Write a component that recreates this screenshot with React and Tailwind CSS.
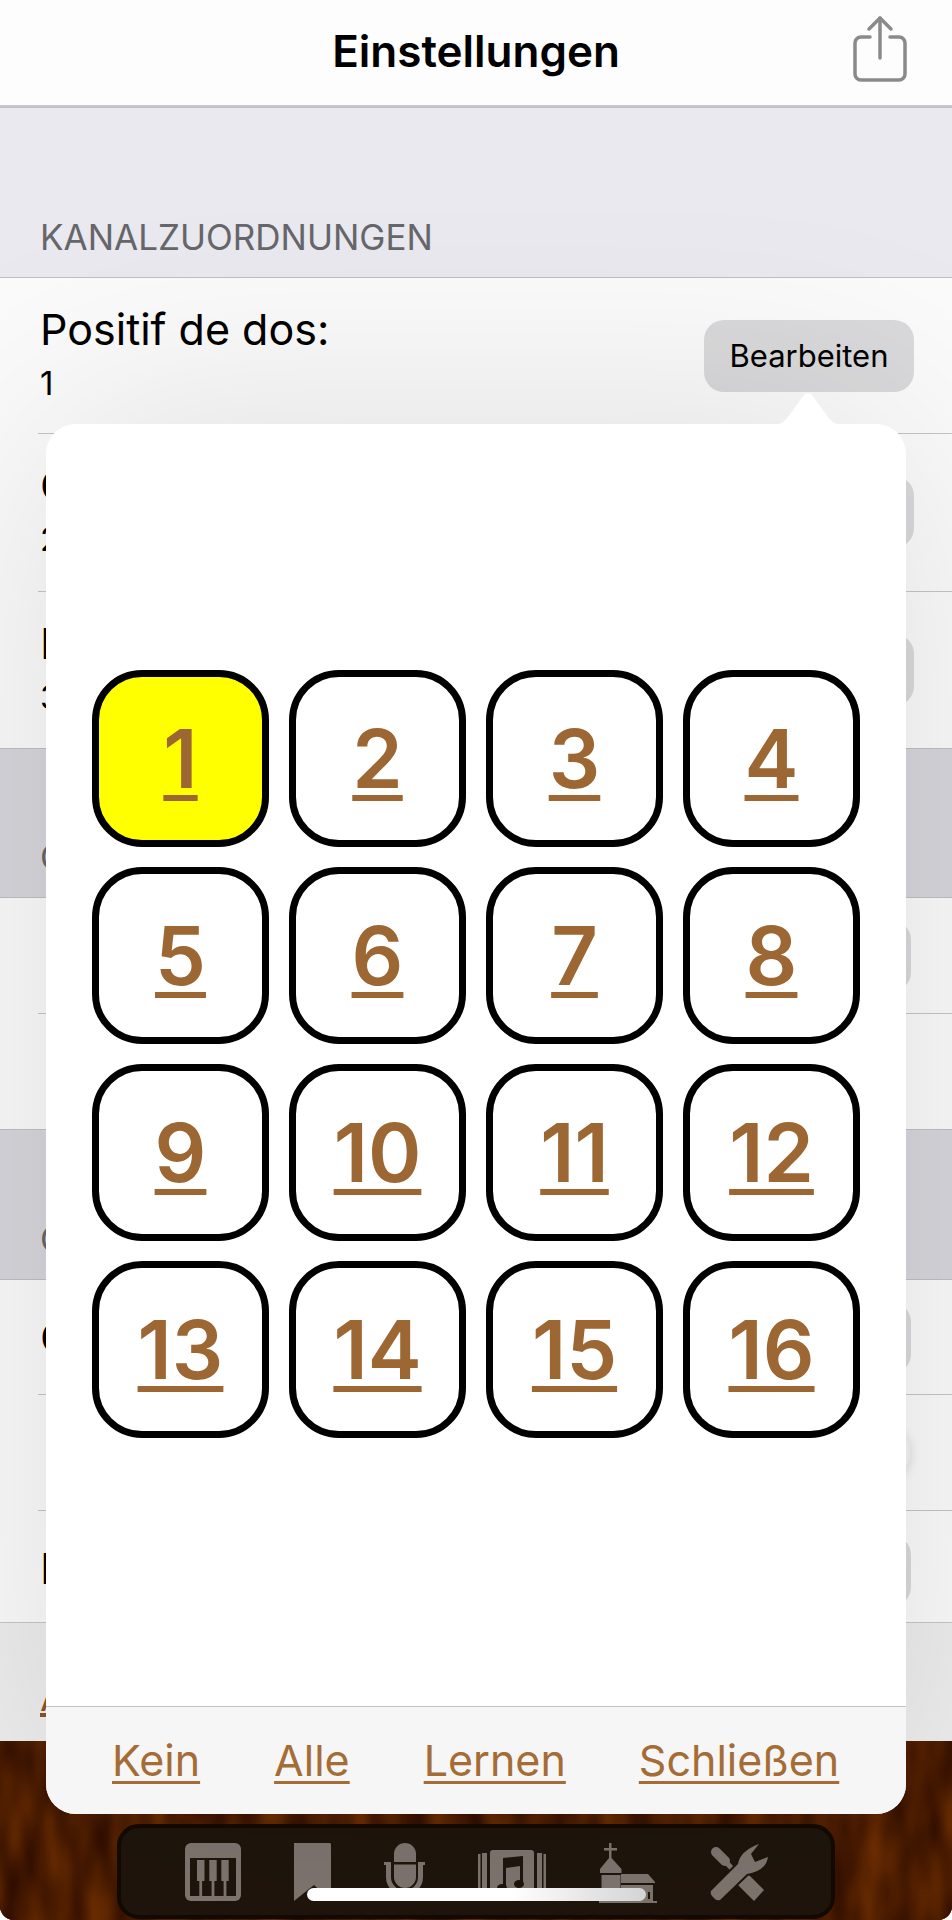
import React from 'react';

const channels = Array.from({ length: 16 }, (_, i) => i + 1);

function ShareIcon() {
  return (
    <svg width="56" height="70" viewBox="0 0 56 70" fill="none" stroke="#8a8a8c" strokeWidth="3.5" strokeLinecap="round" strokeLinejoin="round">
      <path d="M18 22H9a6 6 0 0 0-6 6v31a6 6 0 0 0 6 6h38a6 6 0 0 0 6-6V28a6 6 0 0 0-6-6h-9" />
      <path d="M28 43V3" />
      <path d="M17 14 28 3l11 11" />
    </svg>
  );
}

function PianoIcon() {
  return (
    <svg width="56" height="58" viewBox="0 0 56 58">
      <rect width="56" height="58" rx="6" fill="#7f7670" />
      <rect x="5" y="15" width="46" height="38" fill="#1f150c" />
      <path d="M12 17h7.500v21H12zM24.300 17h7.400v21h-7.400zM36.300 17h7.400v21h-7.400zM14.300 38h2.800v15h-2.800zM26.600 38h2.800v15h-2.800zM38.600 38h2.800v15h-2.800z" fill="#7f7670" />
    </svg>
  );
}

function BookmarkIcon() {
  return (
    <svg width="37" height="58" viewBox="0 0 37 58">
      <path d="M0 0h36l1 1v57L20 42 0 58z" fill="#7f7670" />
    </svg>
  );
}

function MicIcon() {
  return (
    <svg width="41" height="58" viewBox="0 0 41 58">
      <path d="M10 19V11a11 11 0 0 1 22 0v8zM10 21.500h22V34a11 11 0 0 1-22 0z" fill="#7f7670" />
      <path d="M4.500 20v14a16 16 0 0 0 32 0V20" fill="none" stroke="#7f7670" strokeWidth="5" />
      <path d="M0 19h7v3H0zM34 19h7v3h-7zM18 48h5v8h-5zM9 55h23v3H9z" fill="#7f7670" />
    </svg>
  );
}

function AlbumIcon() {
  return (
    <svg width="68" height="51" viewBox="0 0 68 51">
      <rect x="12" width="44" height="51" rx="3" fill="#7f7670" />
      <path d="M0 4h2.500v45H0zM4 3h5v47H4zM59 3h5v47h-5zM65.500 4H68v45h-2.500z" fill="#7f7670" />
      <path d="M25 8 45 6v27h-3V16l-14 2v21h-3z" fill="#1f150c" />
      <ellipse cx="24" cy="38" rx="5" ry="4" fill="#1f150c" />
      <ellipse cx="41" cy="34" rx="5" ry="4" fill="#1f150c" />
    </svg>
  );
}

function ChurchIcon() {
  return (
    <svg width="58" height="60" viewBox="0 0 58 60">
      <path d="M10 0h2.500v5H18v2.500h-5.500V15l10 11v4H1v-4L10 15V7.500H5V5h5zM2.500 32h19v28h-19z" fill="#7f7670" />
      <path d="M22 31h27l7 8v1H22zM22 42h32v16H22z" fill="#7f7670" />
      <path d="M0 58h58v2H0z" fill="#7f7670" />
      <path d="M49 49h2v7h-2z" fill="#1f150c" />
    </svg>
  );
}

function ToolsIcon() {
  return (
    <svg width="58" height="58" viewBox="0 0 58 58">
      <path d="M6 9 15 18" stroke="#7f7670" strokeWidth="10" strokeLinecap="round" fill="none" />
      <path d="M15 18 26 30" stroke="#7f7670" strokeWidth="5" fill="none" />
      <path d="M34 27 54 47 44 58 24 38z" fill="#7f7670" />
      <path
        d="M1 48 28 21Q30 8 49 1L41 11 45 19 58 14Q56 28 37 31L10 57Q7 58 5 56L2 53Q0 50 1 48Z"
        fill="#7f7670"
        stroke="#1f150c"
        strokeWidth="4"
        paintOrder="stroke"
      />
    </svg>
  );
}

function WoodTexture() {
  return (
    <svg className="absolute inset-0 h-full w-full" preserveAspectRatio="none">
      <defs>
        <filter id="wood" x="0" y="0" width="100%" height="100%" colorInterpolationFilters="sRGB">
          <feTurbulence type="fractalNoise" baseFrequency="0.035 0.012" numOctaves="2" seed="7" />
          <feColorMatrix type="matrix" values="0 0 0 0 0.18  0 0 0 0 0.05  0 0 0 0 0  1.800 0 0 0 -0.420" />
        </filter>
      </defs>
      <rect width="100%" height="100%" fill="#6a2c02" />
      <rect width="100%" height="100%" filter="url(#wood)" />
    </svg>
  );
}

function Row({ label, value, height, button, toggle, last, labelClass = 'pt-[27px]', buttonClass = 'mr-[38px] mt-[42px]' }) {
  return (
    <div className="bg-[#fbfbfb] pl-[38px]">
      <div className={`relative flex items-start justify-between ${last ? '' : 'border-b border-[#c6c6c8]'} ${height}`}>
        <div className={`pl-[2px] ${labelClass}`}>
          {label && <div className="text-[43px] leading-[48px] text-black">{label}</div>}
          {value && <div className="mt-[11px] text-[33px] leading-[38px] text-black">{value}</div>}
        </div>
        {button && (
          <button className={`flex h-[72px] w-[210px] items-center justify-center rounded-[20px] bg-[#dadadc] text-[31px] text-black ${buttonClass}`}>
            Bearbeiten
          </button>
        )}
        {toggle && (
          <div className="mr-[42px] mt-[27px] h-[60px] w-[60px] rounded-full bg-[#f4f4f4] shadow-[0_2px_12px_rgba(0,0,0,0.14)]" />
        )}
      </div>
    </div>
  );
}

function SectionHeader({ title, height, bg }) {
  return (
    <div className={`flex items-end border-b border-t border-[#c0c0c4] px-[40px] pb-[20px] text-[35px] leading-[40px] text-[#66666b] ${height} ${bg}`}>
      {title}
    </div>
  );
}

export default function App() {
  return (
    <div className="relative flex h-[1920px] w-[952px] flex-col overflow-hidden rounded-b-[14px] bg-black font-['Inter',sans-serif]">
      {/* Nav bar */}
      <header className="relative z-10 flex h-[107px] shrink-0 items-center justify-center border-b-2 border-[#c8c8cc] bg-[#fdfdfd]">
        <h1 className="pb-[4px] text-[44px] font-semibold text-black">Einstellungen</h1>
        <div className="absolute right-[44px] top-[15px]">
          <ShareIcon />
        </div>
      </header>

      {/* Settings list behind the popover */}
      <div className="flex shrink-0 flex-col">
        <SectionHeader title="KANALZUORDNUNGEN" height="h-[171px]" bg="bg-[#e9e9ef]" />
        <Row label="Positif de dos:" value="1" button height="h-[156px]" />
        <Row label="Grand orgue:" value="2" button height="h-[158px]" />
        <Row label="Récit:" value="3" button last height="h-[156px]" />
        <SectionHeader title="OPTIONEN" height="h-[150px]" bg="bg-[#d7d7dd]" />
        <Row button buttonClass="mr-[41px] mt-[22px]" height="h-[116px]" />
        <Row height="h-[115px]" last />
        <SectionHeader title="GERÄTE" height="h-[151px]" bg="bg-[#d7d7dd]" />
        <Row label="Gerät:" labelClass="pt-[33px]" button buttonClass="mr-[41px] mt-[22px]" height="h-[115px]" />
        <Row toggle height="h-[116px]" />
        <Row label="MIDI:" labelClass="pt-[33px]" button buttonClass="mr-[41px] mt-[24px]" last height="h-[111px]" />
        <div className="h-[119px] border-t border-[#c6c6c8] bg-[#eeeeee] pl-[40px] pt-[50px] text-[40px] leading-[48px] text-[#8a5526] underline">
          Alle zurücksetzen
        </div>
      </div>

      {/* Wooden footer */}
      <div className="relative flex flex-1 justify-center pt-[83px]">
        <WoodTexture />
        <nav className="relative flex h-[95px] w-[718px] shrink-0 justify-center gap-[53px] rounded-[22px] border-[4px] border-[#120a03] bg-[#1f150c] pt-[15px]">
          <div className="shrink-0"><PianoIcon /></div>
          <div className="shrink-0"><BookmarkIcon /></div>
          <div className="shrink-0"><MicIcon /></div>
          <div className="mt-[7px] shrink-0"><AlbumIcon /></div>
          <div className="shrink-0"><ChurchIcon /></div>
          <div className="shrink-0"><ToolsIcon /></div>
        </nav>
      </div>

      {/* Home indicator */}
      <div className="absolute left-[307px] top-[1888px] z-30 h-[13px] w-[339px] rounded-full bg-gradient-to-r from-white from-60% to-[#d4d4d4]" />

      {/* Channel popover */}
      <div className="absolute left-[46px] top-[424px] z-20 flex h-[1390px] w-[860px] flex-col rounded-[30px] bg-white shadow-[0_0_240px_rgba(0,0,0,0.12)]">
        <svg className="absolute left-[726px] top-[-32px]" width="72" height="34" viewBox="0 0 72 34">
          <path d="M0 33C8 33 12 30 16 25L32 3Q36 -1 40 3L56 25C60 30 64 33 72 33V34H0Z" fill="#fff" />
        </svg>

        <div className="flex flex-1 items-center justify-center pb-[22px]">
          <div className="grid grid-cols-4 gap-[20px]">
            {channels.map((n) => (
              <button
                key={n}
                className={`flex h-[177px] w-[177px] items-center justify-center rounded-[50px] border-[7px] border-black pt-[2px] text-[81px] font-semibold leading-none text-[#9c6733] underline decoration-[6px] underline-offset-[7px] ${
                  n === 1 ? 'bg-[#ffff00]' : 'bg-white'
                }`}
              >
                {n}
              </button>
            ))}
          </div>
        </div>

        <div className="flex h-[108px] shrink-0 items-start rounded-b-[30px] border-t border-[#c2c2c4] bg-[#f6f6f6] pl-[66px] pt-[27px] text-[43px] leading-[52px] text-[#a56c35] underline decoration-[3px] underline-offset-[5px]">
          <span className="mr-[74px]">Kein</span>
          <span className="mr-[74px]">Alle</span>
          <span className="mr-[73px]">Lernen</span>
          <span>Schließen</span>
        </div>
      </div>
    </div>
  );
}
